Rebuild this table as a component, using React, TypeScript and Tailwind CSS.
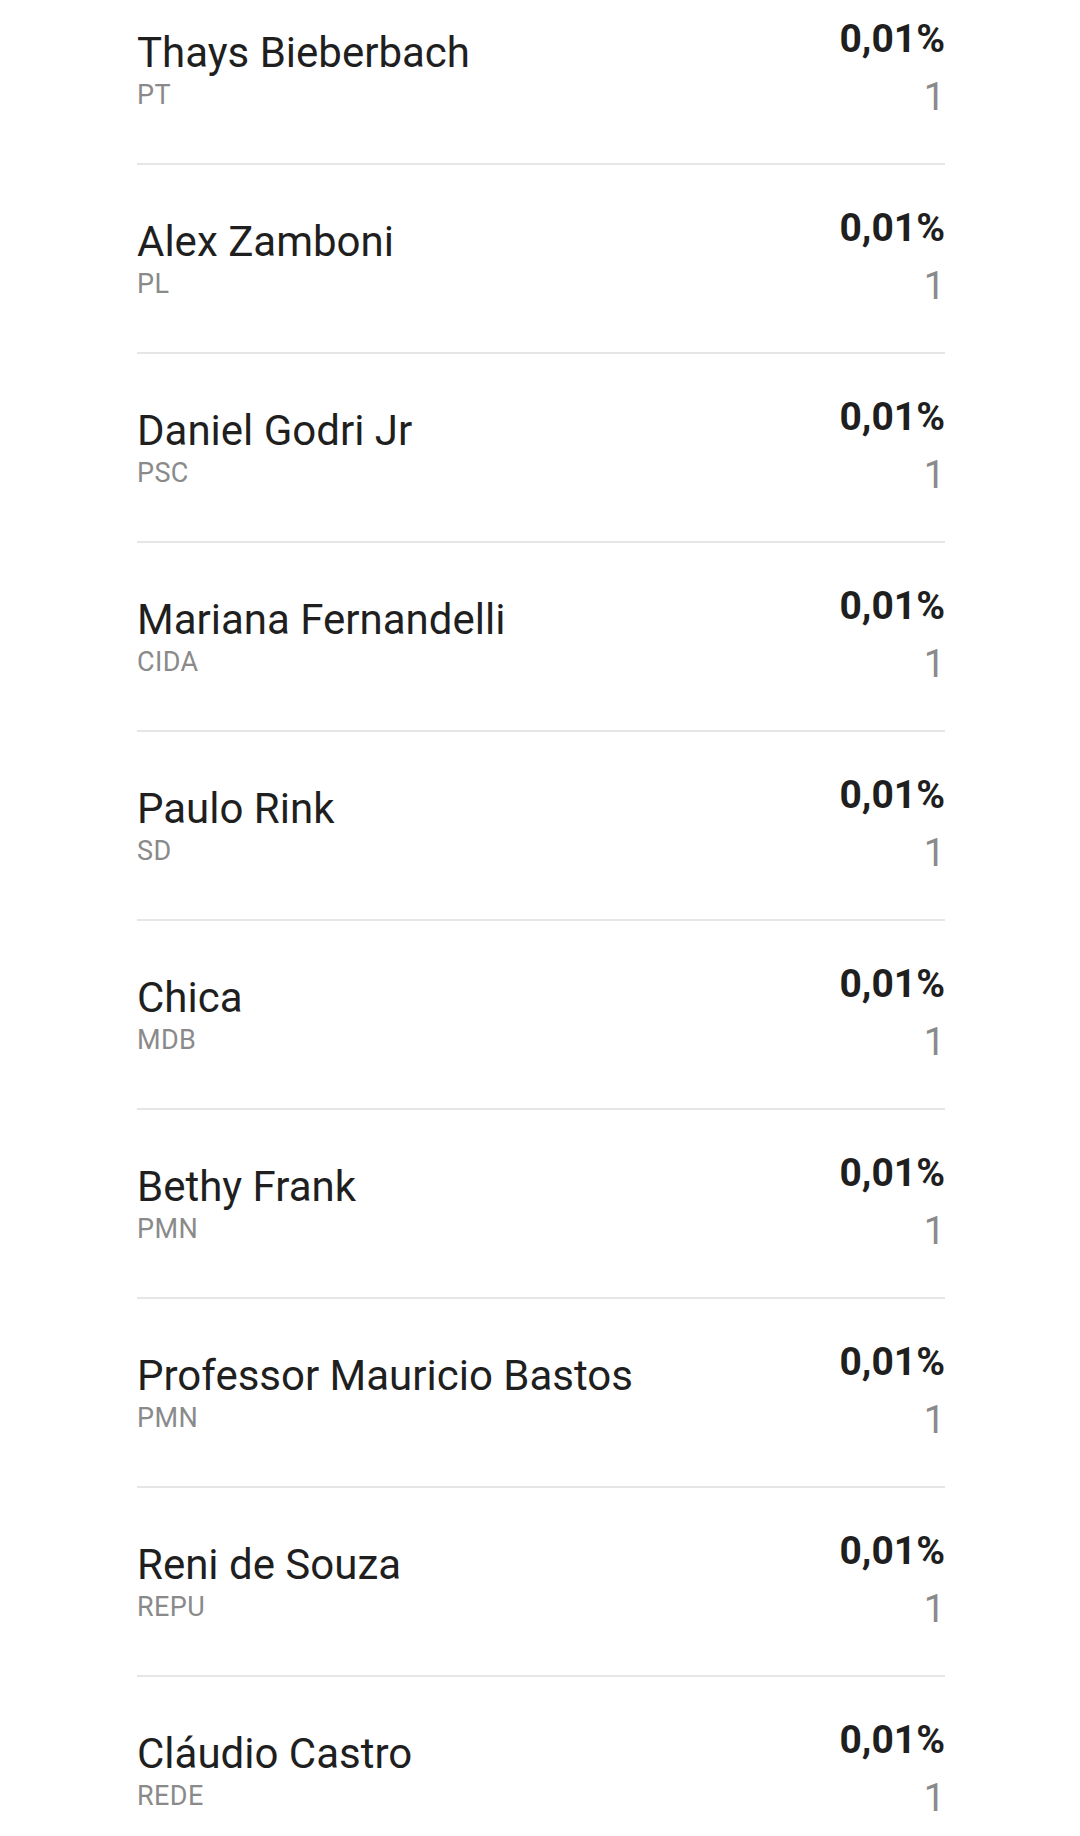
const candidates = [
  { name: "Thays Bieberbach", party: "PT" },
  { name: "Alex Zamboni", party: "PL" },
  { name: "Daniel Godri Jr", party: "PSC" },
  { name: "Mariana Fernandelli", party: "CIDA" },
  { name: "Paulo Rink", party: "SD" },
  { name: "Chica", party: "MDB" },
  { name: "Bethy Frank", party: "PMN" },
  { name: "Professor Mauricio Bastos", party: "PMN" },
  { name: "Reni de Souza", party: "REPU" },
  { name: "Cláudio Castro", party: "REDE" },
];

const App = () => {
  return (
    <main className="min-h-screen bg-white font-['Roboto',sans-serif]">
      <ul className="ml-[137px] w-[808px] -mt-[24px]">
        {candidates.map((c) => (
          <li
            key={c.name}
            className="flex h-[189px] justify-between border-b-2 border-[#e6e6e6]"
          >
            <div className="pt-[53px]">
              <p className="text-[42px] leading-[48px] text-[#1f1f1f]">{c.name}</p>
              <p className="mt-[3px] text-[27px] leading-[30px] tracking-[0.4px] text-[#8a8a8a]">
                {c.party}
              </p>
            </div>
            <div className="pt-[41px] text-right">
              <p className="text-[39px] font-bold leading-[44px] text-[#1f1f1f]">0,01%</p>
              <p className="mt-[16px] text-[38px] leading-[40px] text-[#8a8a8a]">1</p>
            </div>
          </li>
        ))}
      </ul>
    </main>
  );
};

export default App;
